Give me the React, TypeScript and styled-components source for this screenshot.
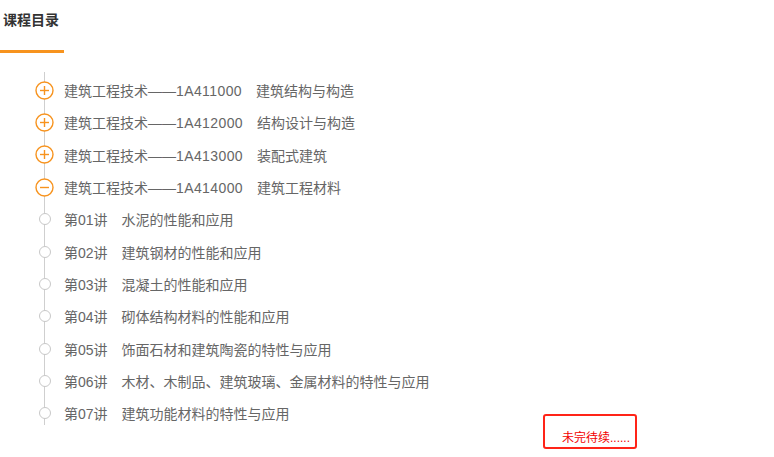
import styled, { createGlobalStyle } from 'styled-components';

const GlobalStyle = createGlobalStyle`
  body {
    margin: 0;
    background: #fff;
    font-family: "Liberation Sans", "Noto Sans CJK SC", sans-serif;
  }
`;

const Page = styled.div`
  position: relative;
  width: 774px;
  height: 457px;
  overflow: hidden;
`;

const Header = styled.div`
  height: 53px;
`;

const Title = styled.div`
  display: inline-block;
  width: 61px;
  padding: 10px 0 0 3px;
  height: 40px;
  box-sizing: content-box;
  font-size: 14px;
  line-height: 20px;
  font-weight: bold;
  color: #333;
  border-bottom: 3px solid #f7931e;
`;

const Tree = styled.ul`
  position: relative;
  list-style: none;
  margin: 21px 0 0;
  padding: 0 0 0 35px;
  &::before {
    content: '';
    position: absolute;
    left: 44px;
    top: -2px;
    bottom: 4px;
    width: 1px;
    background: #cfcfcf;
  }
`;

const Row = styled.li`
  position: relative;
  display: flex;
  align-items: center;
  height: 32.3px;
  font-size: 14px;
  color: #666;
`;

const IconSlot = styled.span`
  display: flex;
  align-items: center;
  justify-content: center;
  width: 19px;
  height: 19px;
  margin-right: 10px;
  flex-shrink: 0;
`;

const Dot = styled.span`
  width: 10px;
  height: 10px;
  border: 1px solid #c8c8c8;
  border-radius: 50%;
  background: #fff;
`;

const Part = styled.span<{ $gap?: boolean }>`
  margin-left: ${p => (p.$gap ? '14px' : '0')};
  white-space: nowrap;
`;

const Code = styled.span`
  letter-spacing: 0.4px;
`;

const Note = styled.div`
  position: absolute;
  left: 543px;
  top: 414px;
  width: 94px;
  height: 35px;
  border: 2.5px solid #ff2418;
  border-radius: 3px;
  padding: 15px 0 0 17px;
  box-sizing: border-box;
  font-size: 12px;
  line-height: 14px;
  color: #f20000;
`;

function Toggle({ open }: { open: boolean }) {
  return (
    <svg width="19" height="19" viewBox="0 0 19 19">
      <circle cx="9.5" cy="9.5" r="8.5" fill="#fff" stroke="#f7931e" strokeWidth="1.4" />
      <line x1="5" y1="9.5" x2="14" y2="9.5" stroke="#f7931e" strokeWidth="1.4" />
      {!open && <line x1="9.5" y1="5" x2="9.5" y2="14" stroke="#f7931e" strokeWidth="1.4" />}
    </svg>
  );
}

const chapters = [
  { code: '1A411000', name: '建筑结构与构造', open: false },
  { code: '1A412000', name: '结构设计与构造', open: false },
  { code: '1A413000', name: '装配式建筑', open: false },
  { code: '1A414000', name: '建筑工程材料', open: true },
];

const lessons = [
  '水泥的性能和应用',
  '建筑钢材的性能和应用',
  '混凝土的性能和应用',
  '砌体结构材料的性能和应用',
  '饰面石材和建筑陶瓷的特性与应用',
  '木材、木制品、建筑玻璃、金属材料的特性与应用',
  '建筑功能材料的特性与应用',
];

export default function App() {
  return (
    <Page>
      <GlobalStyle />
      <Header>
        <Title>课程目录</Title>
      </Header>
      <Tree>
        {chapters.map(c => (
          <Row key={c.code}>
            <IconSlot>
              <Toggle open={c.open} />
            </IconSlot>
            <Part>
              建筑工程技术——<Code>{c.code}</Code>
            </Part>
            <Part $gap>{c.name}</Part>
          </Row>
        ))}
        {lessons.map((l, i) => (
          <Row key={l}>
            <IconSlot>
              <Dot />
            </IconSlot>
            <Part>第0{i + 1}讲</Part>
            <Part $gap>{l}</Part>
          </Row>
        ))}
      </Tree>
      <Note>未完待续......</Note>
    </Page>
  );
}
